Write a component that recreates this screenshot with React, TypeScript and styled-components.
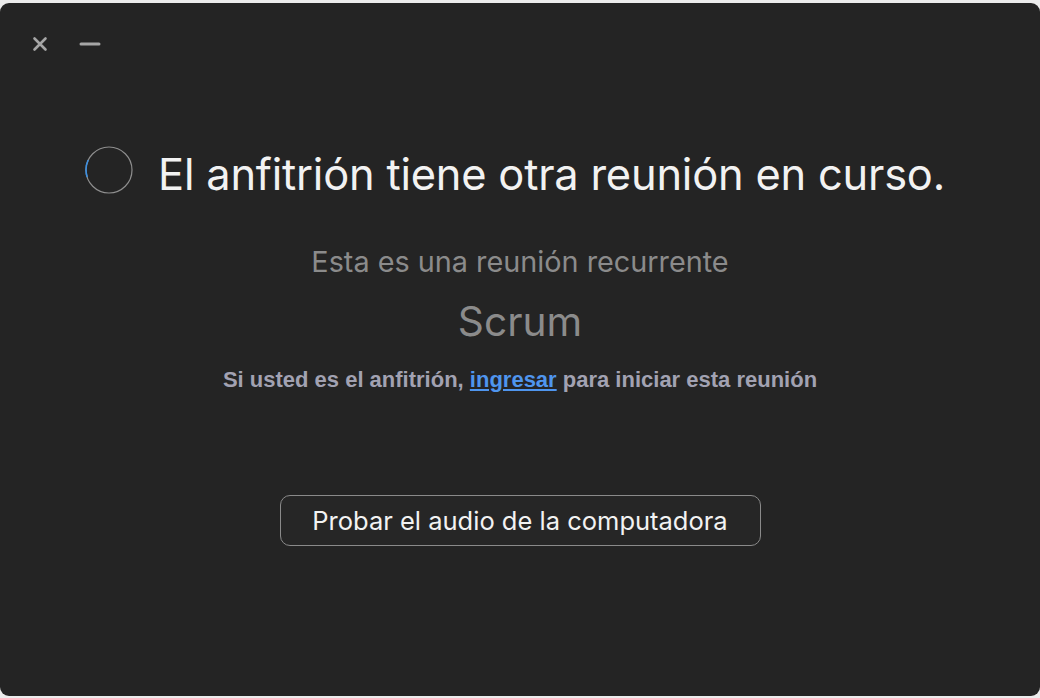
import * as React from "react"
import styled, { createGlobalStyle } from "styled-components"

const GlobalStyle = createGlobalStyle`
    html, body {
        margin: 0;
        padding: 0;
        background: #ececec;
    }
    body {
        font-family: Inter, "Noto Sans", sans-serif;
    }
`

const Window = styled.div`
    box-sizing: border-box;
    margin-top: 3px;
    height: 693px;
    width: 1040px;
    background: #242424;
    border-radius: 9px;
    display: flex;
    flex-direction: column;
    align-items: center;
`

const TitleBar = styled.div`
    align-self: stretch;
    display: flex;
    align-items: center;
    gap: 24px;
    padding: 29px 0 0 27px;
    height: 24px;
`

const WinButton = styled.button`
    width: 26px;
    height: 24px;
    padding: 0;
    border: none;
    background: transparent;
    display: flex;
    align-items: center;
    justify-content: center;
    cursor: pointer;
`

const Heading = styled.div`
    display: flex;
    align-items: center;
    gap: 25px;
    margin-top: 90px;
    margin-right: 10px;
`

const SpinnerBox = styled.svg`
    flex: none;
    margin-bottom: 7px;
`

const Title = styled.h1`
    margin: 0;
    font-size: 43.4px;
    font-weight: 400;
    color: #f2f2f2;
    letter-spacing: -0.2px;
`

const Subtitle = styled.div<{ $size: number; $top: number }>`
    margin-top: ${p => p.$top}px;
    font-size: ${p => p.$size}px;
    color: #8b8b8b;
`

const Hint = styled.p`
    margin: 21px 0 0;
    font-family: "Liberation Sans", Arial, sans-serif;
    font-weight: 700;
    font-size: 22px;
    color: #a2a2b2;
`

const Link = styled.a`
    color: #4f95ee;
    text-decoration: underline;
    cursor: pointer;
`

const TestButton = styled.button`
    margin-top: 102px;
    width: 481px;
    height: 51px;
    box-sizing: border-box;
    border: 1.5px solid #8a8a8a;
    border-radius: 10px;
    background: #262626;
    color: #f2f2f2;
    font-family: Inter, "Noto Sans", sans-serif;
    font-size: 25.5px;
    cursor: pointer;
`

const Spinner = () => (
    <SpinnerBox width="48" height="48" viewBox="0 0 48 48">
        <circle cx="24" cy="24" r="23" fill="none" stroke="#8e8e8e" strokeWidth="1.2" />
        <path d="M 3.2 14 A 23 23 0 0 0 2.2 31" fill="none" stroke="#3d8fe0" strokeWidth="1.6" />
    </SpinnerBox>
)

const App = () => (
    <>
        <GlobalStyle />
        <Window>
            <TitleBar>
                <WinButton aria-label="Cerrar">
                    <svg width="16" height="16" viewBox="0 0 16 16">
                        <path d="M2.5 2.5 L13.5 13.5 M13.5 2.5 L2.5 13.5" stroke="#a6a6a6" strokeWidth="2.6" strokeLinecap="round" />
                    </svg>
                </WinButton>
                <WinButton aria-label="Minimizar">
                    <svg width="22" height="6" viewBox="0 0 22 6">
                        <path d="M2 3 L20 3" stroke="#a6a6a6" strokeWidth="3" strokeLinecap="round" />
                    </svg>
                </WinButton>
            </TitleBar>
            <Heading>
                <Spinner />
                <Title>El anfitrión tiene otra reunión en curso.</Title>
            </Heading>
            <Subtitle $size={28.8} $top={43}>Esta es una reunión recurrente</Subtitle>
            <Subtitle $size={40.7} $top={18}>Scrum</Subtitle>
            <Hint>
                Si usted es el anfitrión, <Link>ingresar</Link> para iniciar esta reunión
            </Hint>
            <TestButton>Probar el audio de la computadora</TestButton>
        </Window>
    </>
)

export default App
